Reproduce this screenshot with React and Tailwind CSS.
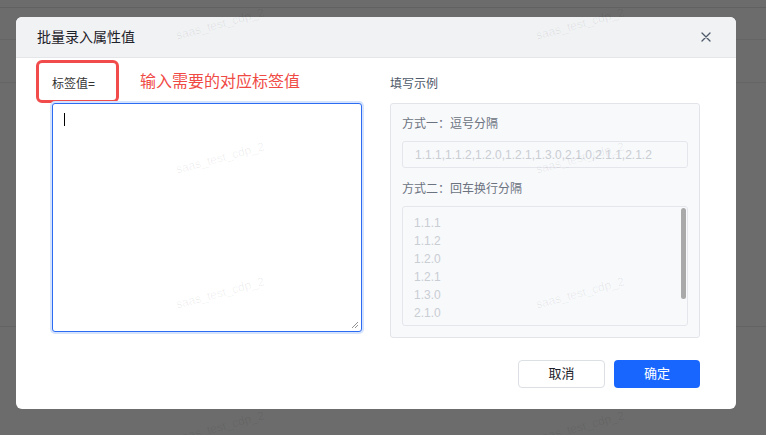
import React from "react";

const font = "font-['Liberation_Sans','Noto_Sans_CJK_SC',sans-serif]";

// faint tiled watermark over the whole page
const marks = [
  [220, 24], [580, 24],
  [220, 158], [580, 158],
  [220, 293], [580, 293],
  [220, 427], [580, 427],
];

const sampleLines = ["1.1.1", "1.1.2", "1.2.0", "1.2.1", "1.3.0", "2.1.0", "2.1.1", "2.1.2"];

const App = () => {
  return (
    <div className={`relative w-[766px] h-[435px] overflow-hidden bg-[#6b6c6b] ${font}`}>
      {/* page behind the overlay */}
      <div className="flex flex-col">
        <div className="h-[8px] border-b border-[#606160]" />
        <div className="h-[32px] border-b border-[#646564]" />
        <div className="h-[43px] border-b border-[#646564]" />
        <div className="h-[244px] border-b border-[#626362]" />
      </div>

      {/* dialog */}
      <div className="absolute left-[16px] top-[17px] w-[720px] h-[392px] bg-white rounded-[6px] overflow-hidden flex flex-col">
        <div className="h-[41px] shrink-0 bg-[#f1f2f4] border-b border-[#e4e6ea] flex items-center justify-between pl-[21px] pr-[25px]">
          <span className="text-[14px] text-[#1d2129]">批量录入属性值</span>
          <svg width="10" height="10" viewBox="0 0 10 10" className="text-[#4e5969]">
            <path d="M1 1L9 9M9 1L1 9" stroke="currentColor" strokeWidth="1.3" strokeLinecap="round" />
          </svg>
        </div>

        <div className="relative flex-1 flex flex-col px-[36px] pt-[16px] pb-[21px]">
          {/* red annotation frame */}
          <div className="absolute left-[20px] top-[2px] w-[83px] h-[43px] border-[3px] border-[#f24b4b] rounded-[6px]" />
          <span className="absolute left-[124px] top-[13px] text-[16px] leading-[22px] text-[#f04a45]">
            输入需要的对应标签值
          </span>

          <div className="flex gap-[28px]">
            {/* left column */}
            <div className="w-[310px] flex flex-col">
              <div className="h-[20px] mb-[9px] flex items-center text-[12px] text-[#333]">标签值=</div>
              <div className="relative h-[229px] rounded-[3px] border border-[#2c6cf3] ring-2 ring-[#d6e3fd] bg-white">
                <div className="absolute left-[11px] top-[9px] w-[1px] h-[13px] bg-black" />
                <svg width="8" height="8" viewBox="0 0 8 8" className="absolute right-[2px] bottom-[2px]">
                  <path d="M7 1L1 7M7 4L4 7" stroke="#777" strokeWidth="0.8" />
                </svg>
              </div>
            </div>

            {/* right column */}
            <div className="w-[310px] flex flex-col">
              <div className="h-[20px] mb-[9px] flex items-center text-[12px] text-[#4e5969]">填写示例</div>
              <div className="h-[235px] rounded-[3px] border border-[#e2e4e9] bg-[#f8f9fb] px-[11px] flex flex-col">
                <div className="h-[20px] mt-[10px] flex items-center text-[12px] text-[#6b7280]">方式一：逗号分隔</div>
                <div className="mt-[7px] h-[27px] rounded-[3px] border border-[#e5e6eb] flex items-center px-[12px] text-[12px] text-[#c9cdd4] whitespace-nowrap overflow-hidden">
                  1.1.1,1.1.2,1.2.0,1.2.1,1.3.0,2.1.0,2.1.1,2.1.2
                </div>
                <div className="h-[20px] mt-[11px] flex items-center text-[12px] text-[#6b7280]">方式二：回车换行分隔</div>
                <div className="relative mt-[7px] h-[120px] rounded-[3px] border border-[#e5e6eb] overflow-hidden px-[11px] pt-[7px]">
                  {sampleLines.map((line) => (
                    <div key={line} className="h-[18px] leading-[18px] text-[12px] text-[#c9cdd4]">
                      {line}
                    </div>
                  ))}
                  <div className="absolute right-[1px] top-[1px] w-[5px] h-[91px] rounded-full bg-[#a9a9a9]" />
                </div>
              </div>
            </div>
          </div>

          <div className="mt-auto flex justify-end gap-[9px]">
            <button className="w-[87px] h-[28px] rounded-[4px] border border-[#dcdfe4] bg-white text-[13px] text-[#1d2129]">
              取消
            </button>
            <button className="w-[86px] h-[28px] rounded-[4px] bg-[#1966ff] text-[13px] text-white">
              确定
            </button>
          </div>
        </div>
      </div>

      {/* watermark layer */}
      {marks.map(([x, y], i) => (
        <span
          key={i}
          className="pointer-events-none absolute -translate-x-1/2 -translate-y-1/2 -rotate-[15deg] text-[12px] text-black/[0.07] whitespace-nowrap"
          style={{ left: x, top: y }}
        >
          saas_test_cdp_2
        </span>
      ))}
    </div>
  );
};

export default App;
